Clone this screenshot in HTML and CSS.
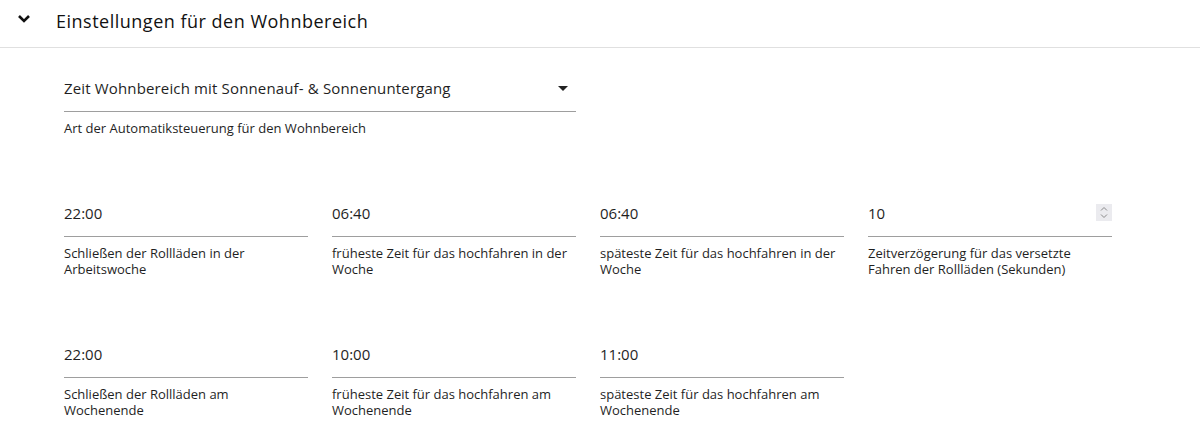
FILE: index.html
```html
<!DOCTYPE html>
<html lang="de">
<head>
<meta charset="utf-8">
<title>Einstellungen</title>
<link rel="stylesheet" href="styles.css">
</head>
<body>
<header class="panel-header">
  <svg class="chevron" width="14" height="10" viewBox="0 0 14 10"><path d="M2 2 L7 7 L12 2" fill="none" stroke="#111" stroke-width="2.6"/></svg>
  <span class="title">Einstellungen für den Wohnbereich</span>
</header>
<main class="content">
  <div class="select-field">
    <div class="select-value">
      <span>Zeit Wohnbereich mit Sonnenauf- &amp; Sonnenuntergang</span>
      <svg class="caret" width="10" height="5" viewBox="0 0 10 5"><path d="M0 0 H10 L5 5 Z" fill="#222"/></svg>
    </div>
    <div class="label">Art der Automatiksteuerung für den Wohnbereich</div>
  </div>
  <div class="grid">
    <div class="field"><div class="value">22:00</div><div class="label">Schließen der Rollläden in der Arbeitswoche</div></div>
    <div class="field"><div class="value">06:40</div><div class="label">früheste Zeit für das hochfahren in der Woche</div></div>
    <div class="field"><div class="value">06:40</div><div class="label">späteste Zeit für das hochfahren in der Woche</div></div>
    <div class="field"><div class="value number"><span>10</span>
      <span class="spinner"><svg width="16" height="17" viewBox="0 0 16 17"><path d="M5 6.5 L8 3.5 L11 6.5 M5 10.5 L8 13.5 L11 10.5" fill="none" stroke="#8a8a8a" stroke-width="1"/></svg></span></div>
      <div class="label">Zeitverzögerung für das versetzte Fahren der Rollläden (Sekunden)</div></div>
    <div class="field"><div class="value">22:00</div><div class="label">Schließen der Rollläden am Wochenende</div></div>
    <div class="field"><div class="value">10:00</div><div class="label">früheste Zeit für das hochfahren am Wochenende</div></div>
    <div class="field"><div class="value">11:00</div><div class="label">späteste Zeit für das hochfahren am Wochenende</div></div>
  </div>
</main>
</body>
</html>
```
FILE: styles.css
```css
* { box-sizing: border-box; }
body {
  margin: 0;
  font-family: "Open Sans", "Noto Sans", sans-serif;
  color: #1f1f1f;
  background: #fff;
}
.panel-header {
  height: 48px;
  display: flex;
  align-items: center;
  border-bottom: 1px solid #e0e0e0;
  padding-left: 17px;
  padding-bottom: 6px;
}
.chevron { margin-right: 25px; margin-top: -4px; }
.title { font-size: 18px; color: #111; letter-spacing: 0.5px; }
.content { padding-left: 64px; padding-top: 28px; }
.select-field { width: 512px; }
.select-value {
  height: 36px;
  display: flex;
  align-items: flex-start;
  justify-content: space-between;
  border-bottom: 1px solid #9e9e9e;
  font-size: 15px;
  line-height: 24px;
  letter-spacing: 0.15px;
  padding-right: 8px;
}
.caret { margin-top: 10px; }
.label {
  font-size: 13px;
  line-height: 16px;
  margin-top: 8px;
  color: #1f1f1f;
}
.grid {
  margin-top: 65px;
  display: grid;
  grid-template-columns: repeat(4, 244px);
  column-gap: 24px;
  row-gap: 65px;
}
.field .value {
  height: 36px;
  border-bottom: 1px solid #9e9e9e;
  font-size: 15px;
  line-height: 24px;
}
.field .label { min-height: 32px; }
.value.number { display: flex; justify-content: space-between; align-items: flex-start; }
.spinner {
  width: 16px;
  height: 17px;
  background: #ebebef;
  margin-top: 3px;
  display: block;
}
.spinner svg { display: block; }
```
